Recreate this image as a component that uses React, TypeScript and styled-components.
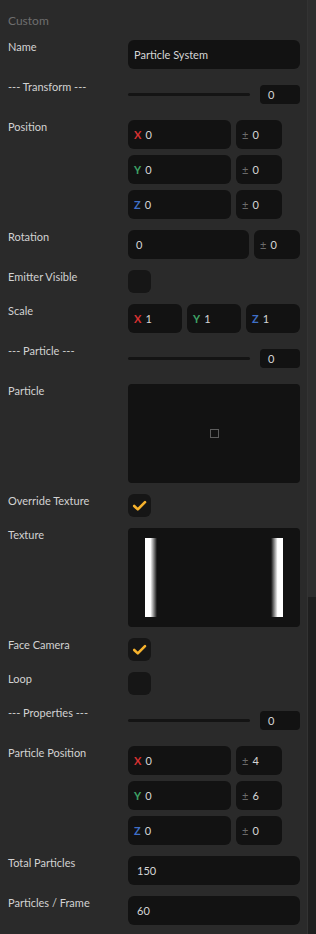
import React from 'react';
import styled, { createGlobalStyle } from 'styled-components';

const GlobalStyle = createGlobalStyle`
  html, body {
    margin: 0;
    padding: 0;
    background: #2a2a2a;
  }
  body {
    font-family: Lato, 'Noto Sans', sans-serif;
    -webkit-font-smoothing: antialiased;
  }
`;

type Axis = 'X' | 'Y' | 'Z';

const axisColors: Record<Axis, string> = {
  X: '#d83131',
  Y: '#3ea466',
  Z: '#3f6fc6',
};

const Check = () => (
  <svg width='23' height='23' viewBox='0 0 23 23'>
    <path
      d='M6.2 12 L9.8 15.4 L17 8.2'
      fill='none'
      stroke='#f6b22d'
      strokeWidth='2.6'
      strokeLinecap='round'
      strokeLinejoin='round'
    />
  </svg>
);

type VectorProps = {
  axis: Axis;
  value: string;
  spread?: string;
};

const VectorInput = ({ axis, value, spread }: VectorProps) => (
  <VectorRow wide={spread !== undefined}>
    <Field>
      <AxisTag axis={axis}>{axis}</AxisTag>
      {value}
    </Field>
    {spread !== undefined && (
      <Field>
        <Plus>±</Plus>
        {spread}
      </Field>
    )}
  </VectorRow>
);

const SectionSlider = ({ label }: { label: string }) => (
  <Row>
    <Label>--- {label} ---</Label>
    <SliderWrap>
      <Track />
      <NumBox>0</NumBox>
    </SliderWrap>
  </Row>
);

const App = () => {
  return (
    <Page>
      <GlobalStyle />
      <Panel>
        <Title>Custom</Title>

        <Row>
          <Label>Name</Label>
          <Field>Particle System</Field>
        </Row>

        <SectionSlider label='Transform' />

        <Row>
          <Label>Position</Label>
          <Stack>
            <VectorInput axis='X' value='0' spread='0' />
            <VectorInput axis='Y' value='0' spread='0' />
            <VectorInput axis='Z' value='0' spread='0' />
          </Stack>
        </Row>

        <Row>
          <Label>Rotation</Label>
          <SplitRow>
            <Field pad={8}>0</Field>
            <Field>
              <Plus>±</Plus>0
            </Field>
          </SplitRow>
        </Row>

        <Row>
          <Label>Emitter Visible</Label>
          <CheckBox />
        </Row>

        <Row>
          <Label>Scale</Label>
          <TripleRow>
            <Field>
              <AxisTag axis='X'>X</AxisTag>1
            </Field>
            <Field>
              <AxisTag axis='Y'>Y</AxisTag>1
            </Field>
            <Field>
              <AxisTag axis='Z'>Z</AxisTag>1
            </Field>
          </TripleRow>
        </Row>

        <SectionSlider label='Particle' />

        <Row>
          <Label>Particle</Label>
          <Preview>
            <Dot />
          </Preview>
        </Row>

        <Row>
          <Label>Override Texture</Label>
          <CheckBox>
            <Check />
          </CheckBox>
        </Row>

        <Row>
          <Label>Texture</Label>
          <TexturePreview>
            <Stripe side='left' />
            <Stripe side='right' />
          </TexturePreview>
        </Row>

        <Row>
          <Label>Face Camera</Label>
          <CheckBox>
            <Check />
          </CheckBox>
        </Row>

        <Row>
          <Label>Loop</Label>
          <CheckBox />
        </Row>

        <SectionSlider label='Properties' />

        <Row>
          <Label>Particle Position</Label>
          <Stack>
            <VectorInput axis='X' value='0' spread='4' />
            <VectorInput axis='Y' value='0' spread='6' />
            <VectorInput axis='Z' value='0' spread='0' />
          </Stack>
        </Row>

        <Row>
          <Label>Total Particles</Label>
          <Field pad={9}>150</Field>
        </Row>

        <Row>
          <Label>Particles / Frame</Label>
          <Field pad={9}>60</Field>
        </Row>
      </Panel>
      <ScrollBar>
        <Thumb />
      </ScrollBar>
    </Page>
  );
};

export default App;

const Page = styled.div`
  display: flex;
  height: 934px;
  overflow: hidden;
  background: #2a2a2a;
`;

const Panel = styled.div`
  flex: 1;
  padding: 13px 7px 0 8px;
`;

const Title = styled.div`
  font-size: 12px;
  line-height: 16px;
  color: #6e6e6e;
  margin-bottom: 11px;
`;

const Row = styled.div`
  display: grid;
  grid-template-columns: 120px 172px;
  margin-bottom: 11px;
`;

const Label = styled.div`
  font-size: 11px;
  line-height: 14px;
  font-weight: 400;
  color: #d2d2d2;
  white-space: nowrap;
`;

const Field = styled.div<{ pad?: number }>`
  height: 29px;
  box-sizing: border-box;
  display: flex;
  align-items: center;
  padding: 0 ${props => props.pad ?? 6}px;
  background: #121212;
  border-radius: 6px;
  color: #d6d6d6;
  font-size: 11px;
  white-space: nowrap;
  overflow: hidden;
`;

const AxisTag = styled.span<{ axis: Axis }>`
  color: ${props => axisColors[props.axis]};
  font-weight: 700;
  margin-right: 4px;
`;

const Plus = styled.span`
  color: #6a6a6a;
  margin-right: 4px;
`;

const Stack = styled.div`
  display: flex;
  flex-direction: column;
  gap: 6px;
`;

const VectorRow = styled.div<{ wide: boolean }>`
  display: grid;
  grid-template-columns: ${props => props.wide ? '103px 46px' : '103px'};
  gap: 5px;
`;

const SplitRow = styled.div`
  display: grid;
  grid-template-columns: 1fr 46px;
  gap: 5px;
`;

const TripleRow = styled.div`
  display: grid;
  grid-template-columns: repeat(3, 1fr);
  gap: 5px;
`;

const SliderWrap = styled.div`
  height: 29px;
  display: flex;
  align-items: center;
  gap: 10px;
`;

const Track = styled.div`
  flex: 1;
  height: 3px;
  border-radius: 2px;
  background: #141414;
`;

const NumBox = styled.div`
  width: 40px;
  height: 19px;
  box-sizing: border-box;
  display: flex;
  align-items: center;
  padding-left: 8px;
  background: #121212;
  border-radius: 4px;
  color: #d6d6d6;
  font-size: 11px;
`;

const CheckBox = styled.div`
  width: 23px;
  height: 23px;
  border-radius: 6px;
  background: #161616;
  display: flex;
  align-items: center;
  justify-content: center;
`;

const Preview = styled.div`
  height: 99px;
  border-radius: 4px;
  background: #121212;
  display: flex;
  align-items: center;
  justify-content: center;
`;

const Dot = styled.div`
  width: 7px;
  height: 7px;
  border: 1px solid #5c5c5c;
`;

const TexturePreview = styled.div`
  height: 99px;
  box-sizing: border-box;
  padding: 10px 17px 10px 17px;
  border-radius: 4px;
  background: #121212;
  display: flex;
  justify-content: space-between;
`;

const Stripe = styled.div<{ side: 'left' | 'right' }>`
  width: 12px;
  background: ${props => props.side === 'left'
    ? 'linear-gradient(to right, #fff 0%, #fff 45%, #121212 100%)'
    : 'linear-gradient(to left, #fff 0%, #fff 45%, #121212 100%)'};
`;

const ScrollBar = styled.div`
  width: 8px;
  border-left: 1px solid #333;
  background: #1f1f1f;
`;

const Thumb = styled.div`
  height: 597px;
  background: #2e2e2e;
`;
